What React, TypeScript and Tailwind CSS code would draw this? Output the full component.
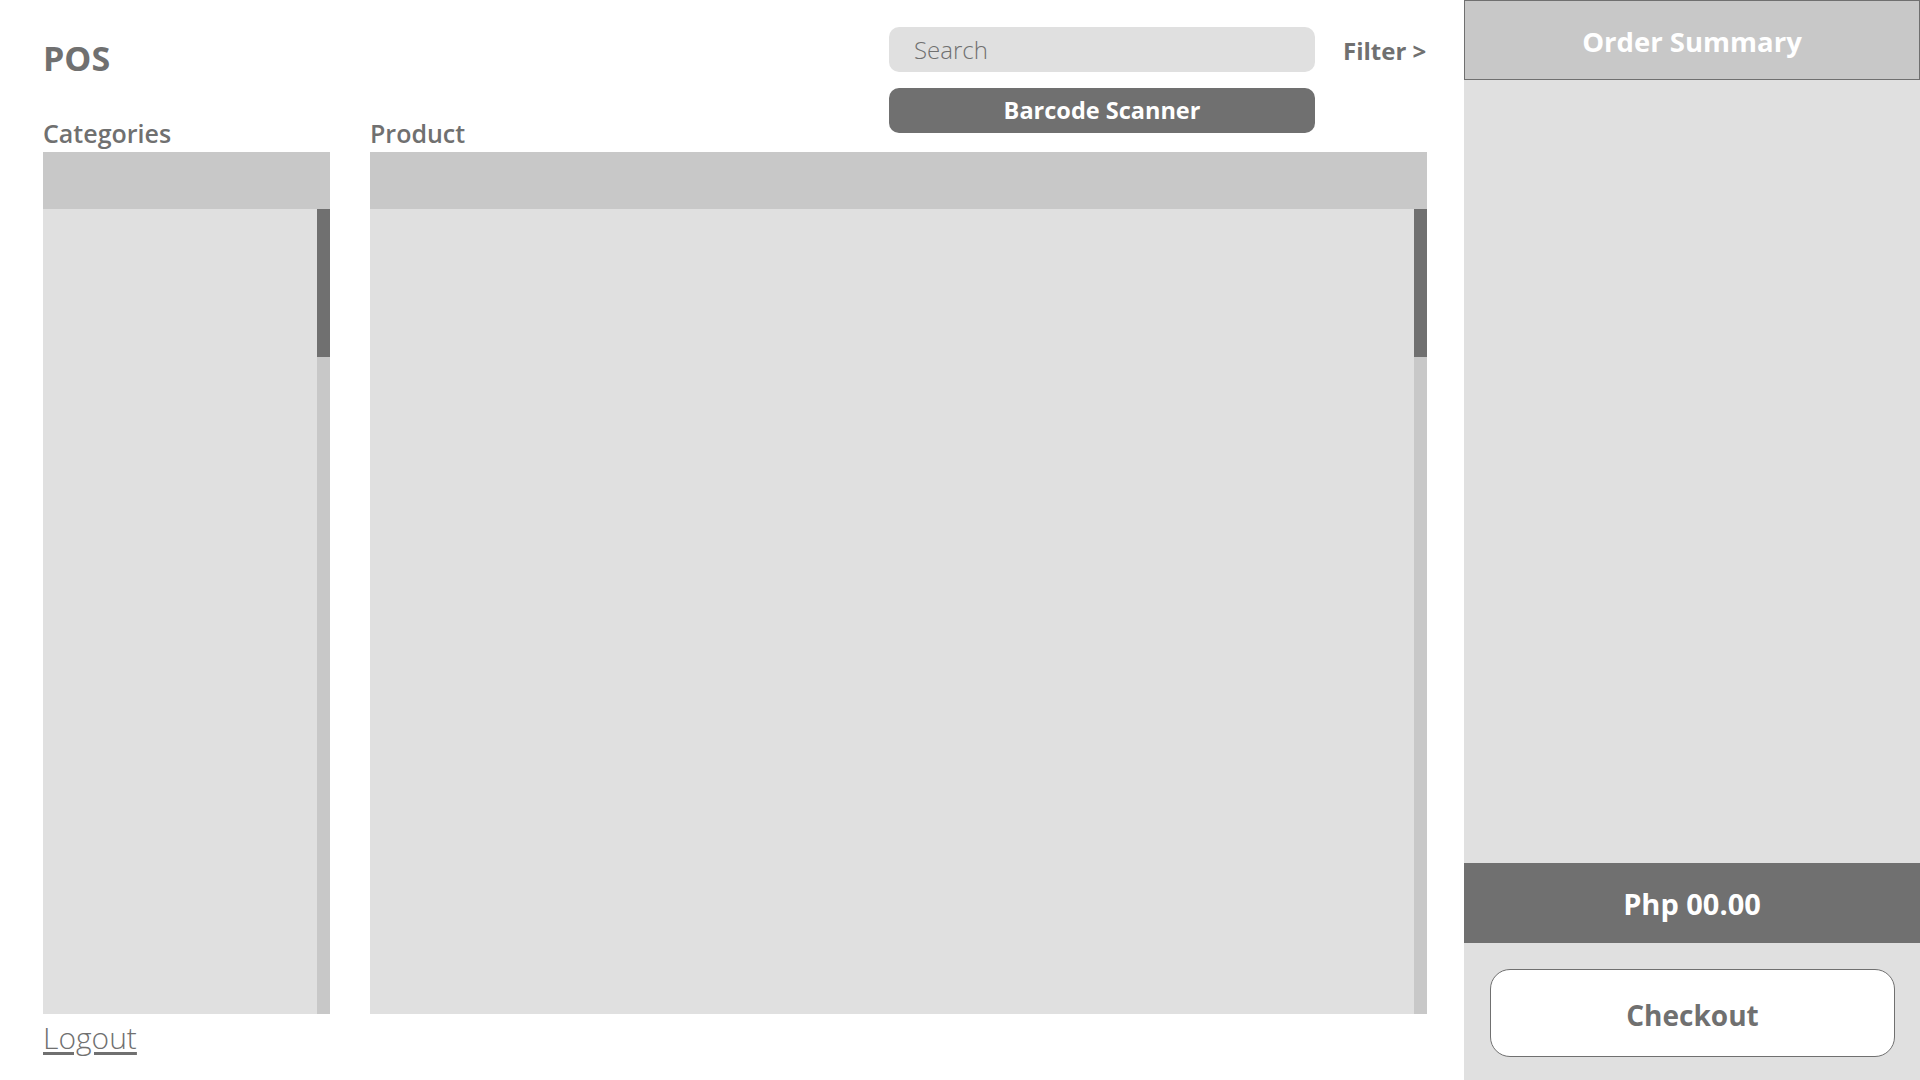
import React from "react";

function Panel({ children }: { children?: React.ReactNode }) {
  return (
    <div className="flex flex-1 flex-col">
      <div className="h-[57px] bg-[#c8c8c8]" />
      <div className="flex flex-1 bg-[#e0e0e0]">
        <div className="flex-1">{children}</div>
        <div className="w-[13px] bg-[#c8c8c8]">
          <div className="h-[148px] bg-[#707070]" />
        </div>
      </div>
    </div>
  );
}

export default function App() {
  return (
    <div className="flex h-[1080px] w-[1920px] bg-white font-['Open_Sans',sans-serif] text-[#707070]">
      <main className="flex w-[1464px] shrink-0 flex-col pl-[43px] pr-[37px]">
        <div className="flex flex-1 gap-[40px]">
          {/* categories column */}
          <section className="flex w-[287px] shrink-0 flex-col">
            <div className="flex h-[152px] flex-col">
              <h1 className="pt-[41px] text-[34px] font-bold leading-[34px]">POS</h1>
              <h2 className="mt-auto mb-[6px] text-[25px] font-semibold leading-[25px]">Categories</h2>
            </div>
            <Panel />
          </section>

          {/* product column */}
          <section className="flex min-w-0 flex-1 flex-col">
            <div className="flex h-[152px]">
              <h2 className="mb-[6px] w-[519px] shrink-0 self-end text-[25px] font-semibold leading-[25px]">Product</h2>
              <div className="flex items-start pt-[27px]">
                <div className="flex w-[426px] shrink-0 flex-col gap-[16px]">
                  <input
                    type="text"
                    placeholder="Search"
                    className="h-[45px] rounded-[10px] bg-[#e0e0e0] pl-[25px] text-[24px] font-light text-[#707070] placeholder:text-[#707070] focus:outline-none"
                  />
                  <button className="h-[45px] rounded-[10px] bg-[#707070] text-[23.5px] font-bold text-white">
                    Barcode Scanner
                  </button>
                </div>
                <button className="ml-[28px] flex h-[48px] items-center whitespace-nowrap text-[24px] font-bold">
                  Filter &gt;
                </button>
              </div>
            </div>
            <Panel />
          </section>
        </div>
        <div className="h-[66px] pt-[9px]">
          <a href="#" className="text-[30px] font-light leading-[30px] underline underline-offset-[3px]">
            Logout
          </a>
        </div>
      </main>

      <aside className="flex w-[456px] flex-col bg-[#e0e0e0]">
        <div className="flex h-[80px] items-center justify-center border border-[#707070] bg-[#c8c8c8] pt-[4px]">
          <h2 className="text-[27.5px] font-bold text-white">Order Summary</h2>
        </div>
        <div className="flex-1" />
        <div className="flex h-[80px] items-center justify-center bg-[#707070] pt-[2px]">
          <span className="text-[29px] font-bold text-white">Php 00.00</span>
        </div>
        <div className="h-[137px] pt-[26px] pl-[26px] pr-[25px]">
          <button className="h-[88px] w-full rounded-[20px] border border-[#707070] bg-white pt-[3px] text-[28px] font-bold text-[#707070]">
            Checkout
          </button>
        </div>
      </aside>
    </div>
  );
}
